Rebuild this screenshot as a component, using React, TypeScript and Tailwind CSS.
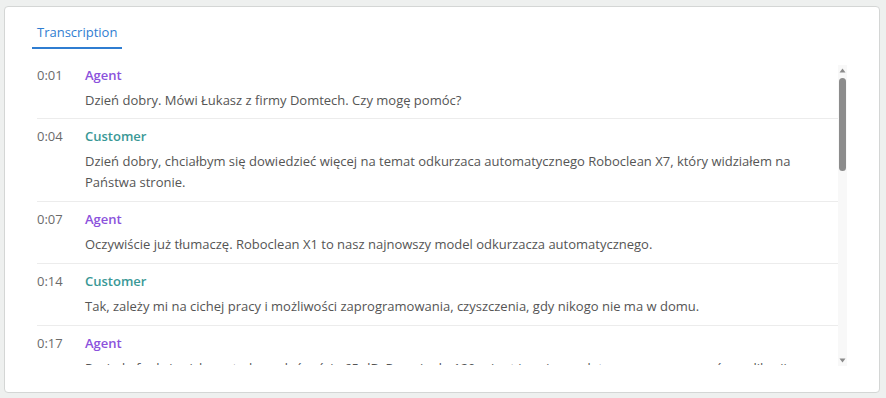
import React from 'react'

interface Line {
  time: string
  speaker: 'Agent' | 'Customer'
  text: string
}

const lines: Line[] = [
  { time: '0:01', speaker: 'Agent', text: 'Dzień dobry. Mówi Łukasz z firmy Domtech. Czy mogę pomóc?' },
  {
    time: '0:04',
    speaker: 'Customer',
    text: 'Dzień dobry, chciałbym się dowiedzieć więcej na temat odkurzaca automatycznego Roboclean X7, który widziałem na Państwa stronie.',
  },
  { time: '0:07', speaker: 'Agent', text: 'Oczywiście już tłumaczę. Roboclean X1 to nasz najnowszy model odkurzacza automatycznego.' },
  { time: '0:14', speaker: 'Customer', text: 'Tak, zależy mi na cichej pracy i możliwości zaprogramowania, czyszczenia, gdy nikogo nie ma w domu.' },
  {
    time: '0:17',
    speaker: 'Agent',
    text: 'Posiada funkcję cichego trybu z głośnością 65 dB. Pracuje do 120 minut i można go łatwo zaprogramować w aplikacji mobilnej.',
  },
]

export default function App() {
  return (
    <div className="w-[886px] h-[398px] bg-[#eef0ef] pt-[6px] pl-[4px]" style={{ fontFamily: '"Open Sans", sans-serif' }}>
      <div className="w-[876px] h-[387px] bg-white border border-[#d4d6d5] rounded-[4px] pl-[27px] pr-[32px] pt-[17px] flex flex-col">
        {/* tabs */}
        <div className="flex">
          <div className="px-[5px] pb-[7px] border-b-2 border-[#2f7dd1] text-[13px] leading-[16px] text-[#2f7dd1]">
            Transcription
          </div>
        </div>

        {/* transcript list */}
        <div className="mt-[16px] ml-[5px] flex items-start h-[301px]">
          <div className="flex-1 h-[300px] overflow-hidden">
            {lines.map((line, i) => (
              <div
                key={i}
                className={`flex border-b border-[#ececec] ${i === 0 ? 'pt-[2px] pb-[7px]' : 'pt-[9px] pb-[8px]'}`}
              >
                <div className="w-[48px] shrink-0 text-[13px] leading-[16px] text-[#6b6b6b]">{line.time}</div>
                <div className="flex-1">
                  <div
                    className={`text-[13px] leading-[16px] font-semibold ${
                      line.speaker === 'Agent' ? 'text-[#8b52dc]' : 'text-[#3a9896]'
                    }`}
                  >
                    {line.speaker}
                  </div>
                  <p className="mt-[7px] text-[13px] leading-[21px] text-[#555555]">{line.text}</p>
                </div>
              </div>
            ))}
          </div>

          {/* scrollbar */}
          <div className="w-[9px] h-[301px] bg-[#f8f8f8] flex flex-col items-center pt-[2px] pb-[3px]">
            <svg width="7" height="5" viewBox="0 0 7 5" className="mt-[1px]">
              <path d="M3.5 0.5 L6.5 4.5 L0.5 4.5 Z" fill="#8a8a8a" />
            </svg>
            <div className="mt-[5px] w-[7px] h-[93px] rounded-full bg-[#8c8c8c]" />
            <div className="flex-1" />
            <svg width="7" height="5" viewBox="0 0 7 5">
              <path d="M0.5 0.5 L6.5 0.5 L3.5 4.5 Z" fill="#8a8a8a" />
            </svg>
          </div>
        </div>
      </div>
    </div>
  )
}
